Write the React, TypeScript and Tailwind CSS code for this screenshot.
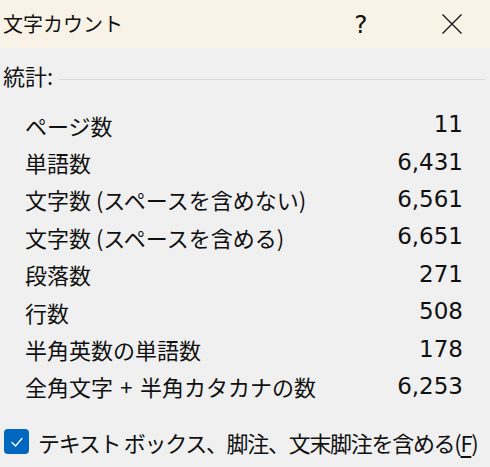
import React from 'react';

const stats: { label: string; value: string }[] = [
  { label: 'ページ数', value: '11' },
  { label: '単語数', value: '6,431' },
  { label: '文字数 (スペースを含めない)', value: '6,561' },
  { label: '文字数 (スペースを含める)', value: '6,651' },
  { label: '段落数', value: '271' },
  { label: '行数', value: '508' },
  { label: '半角英数の単語数', value: '178' },
  { label: '全角文字\u2004+\u2004半角カタカナの数', value: '6,253' },
];

const jp = "font-['Noto_Sans_CJK_JP',sans-serif]";

export default function App() {
  return (
    <div className={`w-[490px] h-[467px] bg-[#f0f0f0] text-[#111] overflow-hidden ${jp}`}>
      {/* title bar */}
      <div className="h-[48px] bg-[#f9f3e7] flex items-center">
        <div className="pl-[3px] text-[20px] leading-none">文字カウント</div>
        <div className="ml-auto w-[40px] text-center text-[25px] leading-none font-['DejaVu_Sans',sans-serif] mr-[60px]">?</div>
        <svg width="22" height="22" viewBox="0 0 22 22" className="mr-[27px] shrink-0">
          <path d="M1.5 1.5 L20.5 20.5 M20.5 1.5 L1.5 20.5" stroke="#1a1a1a" strokeWidth="1.4" fill="none" />
        </svg>
      </div>

      {/* section header */}
      <div className="flex items-center h-[40px] mt-[7px] pl-[3px] pr-[5px]">
        <span className="text-[22px] leading-none">統計:</span>
        <div className="flex-1 h-px bg-[#dadada] ml-[6px] mt-[8px]" />
      </div>

      {/* stats */}
      <div className="mt-[11px] pl-[25px] pr-[27px]">
        {stats.map((s) => (
          <div key={s.label} className="h-[37.4px] flex items-center justify-between">
            <span className="text-[22px] leading-none whitespace-pre">{s.label}</span>
            <span className="text-[23px] leading-none font-['DejaVu_Sans',sans-serif]">{s.value}</span>
          </div>
        ))}
      </div>

      {/* checkbox */}
      <div className="mt-[24px] flex items-center pl-[4px]">
        <div className="w-[25px] h-[25px] shrink-0 rounded-[4px] bg-[#0067c0] flex items-center justify-center">
          <svg width="14" height="14" viewBox="0 0 14 14">
            <path d="M2 7.5 L5.5 11 L12 3.5" stroke="#fff" strokeWidth="1.4" fill="none" strokeLinecap="round" strokeLinejoin="round" />
          </svg>
        </div>
        <span className="ml-[9px] text-[22px] tracking-[-1.3px] leading-none whitespace-nowrap">
          テキスト ボックス、脚注、文末脚注を含める(<span className="underline underline-offset-[4px]">F</span>)
        </span>
      </div>
    </div>
  );
}
